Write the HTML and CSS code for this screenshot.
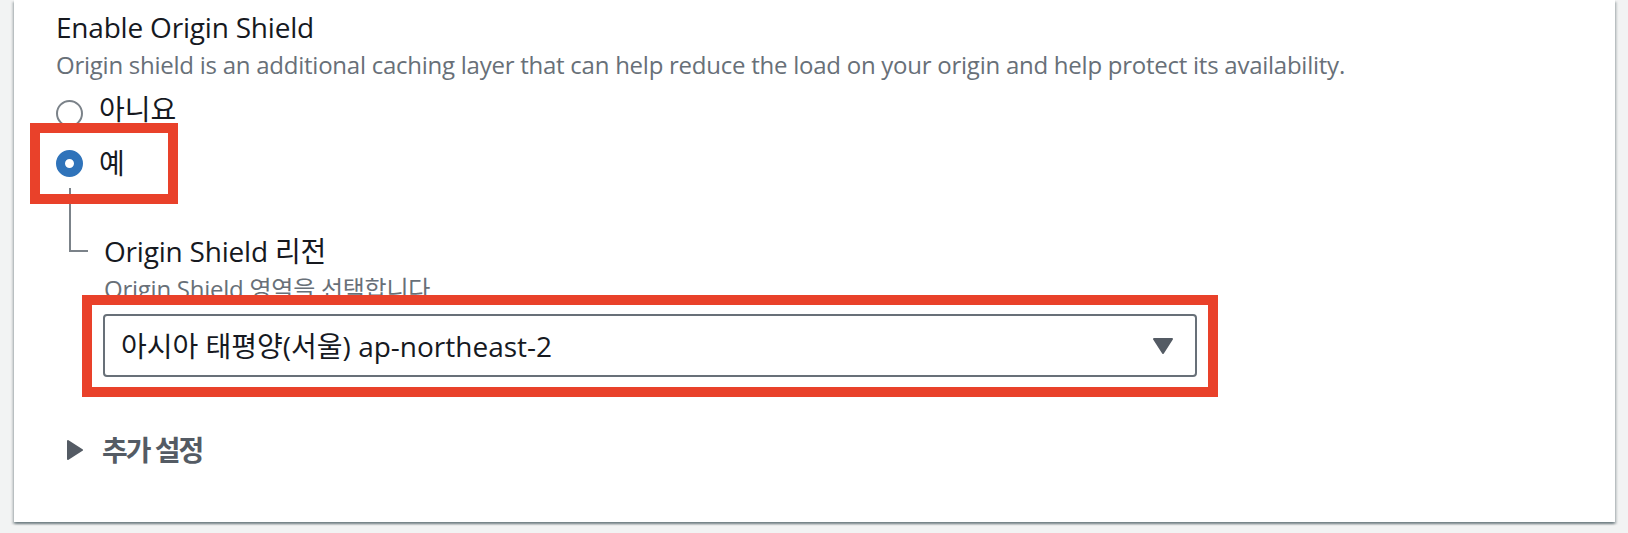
FILE: index.html
```html
<!DOCTYPE html>
<html lang="ko">
<head>
<meta charset="utf-8">
<title>Origin Shield</title>
<link rel="stylesheet" href="styles.css">
</head>
<body>
<div class="page">
  <section class="card">
    <div class="field">
      <div class="label">Enable Origin Shield</div>
      <div class="desc">Origin shield is an additional caching layer that can help reduce the load on your origin and help protect its availability.</div>
      <div class="radios">
        <label class="radio"><span class="dot"></span><span class="radio-text">아니요</span></label>
        <label class="radio checked"><span class="dot"></span><span class="radio-text">예</span></label>
      </div>
      <div class="nested">
        <div class="tree"><div class="tree-line"></div></div>
        <div class="nested-body">
          <div class="label">Origin Shield 리전</div>
          <div class="desc">Origin Shield 영역을 선택합니다</div>
          <div class="select">
            <span class="select-text">아시아 태평양(서울) ap-northeast-2</span>
            <svg class="caret" width="20" height="16" viewBox="0 0 20 16"><polygon points="1,1 19,1 10,15" fill="#545b64" stroke="#545b64" stroke-width="2" stroke-linejoin="round"/></svg>
          </div>
        </div>
      </div>
    </div>
    <div class="expander">
      <svg class="exp-caret" width="16" height="20" viewBox="0 0 16 20"><polygon points="1,1 15,10 1,19" fill="#545b64" stroke="#545b64" stroke-width="2" stroke-linejoin="round"/></svg>
      <span class="exp-text">추가 설정</span>
    </div>
  </section>
  <div class="annot annot-radio"></div>
  <div class="annot annot-select"></div>
</div>
</body>
</html>
```
FILE: styles.css
```css
* { box-sizing: border-box; }
html, body { margin: 0; padding: 0; }
body {
  background: #f2f3f3;
  font-family: "Open Sans", "Noto Sans CJK KR", sans-serif;
  color: #16191f;
  width: 1628px;
  height: 533px;
  overflow: hidden;
}
.page { position: relative; width: 1628px; height: 533px; }
.card {
  margin-left: 14px;
  width: 1601px;
  background: #ffffff;
  padding: 7px 0 52px 42px;
  box-shadow: 0 2px 2px 0 rgba(0, 28, 36, 0.35), 2px 2px 2px 0 rgba(0, 28, 36, 0.15), -2px 2px 2px 0 rgba(0, 28, 36, 0.15);
}
.label {
  font-size: 28px;
  line-height: 40px;
  color: #16191f;
  letter-spacing: -0.2px;
}
.desc {
  margin-top: 2px;
  font-size: 24px;
  line-height: 32px;
  color: #687078;
  white-space: nowrap;
  letter-spacing: -0.25px;
}
.radios {
  margin-top: 12px;
  display: flex;
  flex-direction: column;
  gap: 10px;
}
.radio {
  display: flex;
  align-items: center;
  height: 40px;
  gap: 16px;
}
.dot {
  width: 27px;
  height: 27px;
  border-radius: 50%;
  border: 2px solid #7b8289;
  background: #fff;
  flex: none;
}
.checked .dot {
  border: 9px solid #2f73ba;
}
.radio-text {
  font-size: 28px;
  line-height: 40px;
  margin-bottom: 8px;
}
.checked .radio-text { margin-bottom: 1px; }
.nested { display: flex; }
.tree { width: 47px; flex: none; }
.tree-line {
  margin-top: 5px;
  margin-left: 13px;
  width: 19px;
  height: 64px;
  border-left: 2px solid #7b8289;
  border-bottom: 2px solid #7b8289;
}
.nested-body { margin-top: 48px; }
.nested-body .label { padding-left: 1px; }
.nested-body .desc { padding-left: 1px; }
.select {
  margin-top: 9px;
  width: 1094px;
  height: 63px;
  border: 2px solid #687078;
  border-radius: 4px;
  display: flex;
  align-items: center;
  justify-content: space-between;
  padding: 0 22px 0 16px;
}
.select-text { font-size: 28px; line-height: 40px; color: #16191f; }
.caret { display: block; }
.expander {
  margin-top: 53px;
  padding-left: 11px;
  display: flex;
  align-items: center;
  gap: 19px;
  height: 40px;
}
.exp-caret { display: block; }
.exp-text {
  font-size: 28px;
  line-height: 40px;
  font-weight: 700;
  color: #545b64;
  letter-spacing: -2px;
}
.annot {
  position: absolute;
  border: 10px solid #e9412a;
}
.annot-radio { left: 30px; top: 123px; width: 148px; height: 81px; }
.annot-select { left: 82px; top: 295px; width: 1136px; height: 102px; }
```
